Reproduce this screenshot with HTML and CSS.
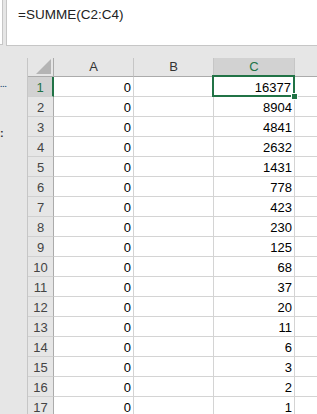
FILE: index.html
```html
<!DOCTYPE html>
<html>
<head>
<meta charset="utf-8">
<link rel="stylesheet" href="styles.css">
</head>
<body>
<div class="app">
  <div class="formula-row">
    <div class="namebox"></div>
    <div class="formula">=SUMME(C2:C4)</div>
  </div>
  <div class="main">
    <div class="side">
      <span class="dots">...</span>
      <span class="colon">:</span>
    </div>
    <div class="sheet">
      <div class="hdr corner"><span class="tri"></span></div>
      <div class="hdr col">A</div>
      <div class="hdr col">B</div>
      <div class="hdr col sel">C</div>
      <div class="hdr col last"></div>

      <div class="rh sel">1</div><div class="c">0</div><div class="c"></div><div class="c active">16377<span class="handle"></span></div><div class="c last"></div>
      <div class="rh">2</div><div class="c">0</div><div class="c"></div><div class="c">8904</div><div class="c last"></div>
      <div class="rh">3</div><div class="c">0</div><div class="c"></div><div class="c">4841</div><div class="c last"></div>
      <div class="rh">4</div><div class="c">0</div><div class="c"></div><div class="c">2632</div><div class="c last"></div>
      <div class="rh">5</div><div class="c">0</div><div class="c"></div><div class="c">1431</div><div class="c last"></div>
      <div class="rh">6</div><div class="c">0</div><div class="c"></div><div class="c">778</div><div class="c last"></div>
      <div class="rh">7</div><div class="c">0</div><div class="c"></div><div class="c">423</div><div class="c last"></div>
      <div class="rh">8</div><div class="c">0</div><div class="c"></div><div class="c">230</div><div class="c last"></div>
      <div class="rh">9</div><div class="c">0</div><div class="c"></div><div class="c">125</div><div class="c last"></div>
      <div class="rh">10</div><div class="c">0</div><div class="c"></div><div class="c">68</div><div class="c last"></div>
      <div class="rh">11</div><div class="c">0</div><div class="c"></div><div class="c">37</div><div class="c last"></div>
      <div class="rh">12</div><div class="c">0</div><div class="c"></div><div class="c">20</div><div class="c last"></div>
      <div class="rh">13</div><div class="c">0</div><div class="c"></div><div class="c">11</div><div class="c last"></div>
      <div class="rh">14</div><div class="c">0</div><div class="c"></div><div class="c">6</div><div class="c last"></div>
      <div class="rh">15</div><div class="c">0</div><div class="c"></div><div class="c">3</div><div class="c last"></div>
      <div class="rh">16</div><div class="c">0</div><div class="c"></div><div class="c">2</div><div class="c last"></div>
      <div class="rh">17</div><div class="c">0</div><div class="c"></div><div class="c">1</div><div class="c last"></div>
    </div>
  </div>
</div>
</body>
</html>
```

FILE: styles.css
```css
* { box-sizing: border-box; }
html, body {
  margin: 0;
  padding: 0;
  width: 317px;
  height: 414px;
  overflow: hidden;
  background: #e6e6e6;
  font-family: "Liberation Sans", Arial, sans-serif;
  font-size: 13px;
  color: #000;
}
.app {
  display: flex;
  flex-direction: column;
  height: 414px;
}
.formula-row {
  display: flex;
  height: 46px;
  gap: 3px;
  flex: none;
}
.namebox {
  width: 3px;
  background: #fff;
  border-right: 1px solid #c6c6c6;
  border-bottom: 1px solid #c6c6c6;
  height: 45px;
}
.formula {
  flex: 1;
  background: #fff;
  border-left: 1px solid #c6c6c6;
  border-bottom: 1px solid #c6c6c6;
  padding: 7px 0 0 11px;
  font-size: 13.5px;
  color: #222;
  line-height: 16px;
}
.main {
  display: flex;
  padding-top: 12px;
  flex: 1;
  min-height: 0;
}
.side {
  width: 28px;
  flex: none;
  border-right: 1px solid #c6c6c6;
  display: flex;
  flex-direction: column;
  align-items: flex-start;
}
.dots {
  margin-top: 22px;
  font-size: 8px;
  line-height: 10px;
  letter-spacing: 0;
  color: #1f4e79;
  font-weight: bold;
}
.colon {
  margin-top: 38px;
  font-size: 11px;
  line-height: 10px;
  color: #333;
  font-weight: bold;
}
.sheet {
  flex: 1;
  display: grid;
  grid-template-columns: 26px 80px 80px 81px 1fr;
  grid-auto-rows: 20px;
  grid-template-rows: 19px;
  align-content: start;
}
.hdr {
  background: #e6e6e6;
  border-right: 1px solid #c6c6c6;
  border-bottom: 1px solid #ababab;
  text-align: center;
  line-height: 18px;
  color: #333;
}
.hdr.last { border-right: none; }
.hdr.sel {
  background: #d2d2d2;
  color: #217346;
  border-bottom: 1px solid #9b9b9b;
}
.corner {
  position: relative;
  border-right: 1px solid #ababab;
}
.tri {
  position: absolute;
  right: 2px;
  bottom: 2px;
  width: 0;
  height: 0;
  border-left: 15px solid transparent;
  border-bottom: 15px solid #b4b4b4;
}
.rh {
  background: #e6e6e6;
  border-right: 1px solid #ababab;
  border-bottom: 1px solid #d0d0d0;
  text-align: center;
  line-height: 20px;
  padding-top: 1px;
  color: #444;
}
.rh.sel {
  background: #d2d2d2;
  color: #217346;
  border-right: 2px solid #217346;
}
.c {
  background: #fff;
  border-right: 1px solid #d4d4d4;
  border-bottom: 1px solid #d4d4d4;
  text-align: right;
  padding-right: 2px;
  line-height: 20px;
  padding-top: 1px;
}
.c.last { border-right: none; }
.active {
  position: relative;
  padding-right: 3px;
}
.active::before {
  content: "";
  position: absolute;
  left: -2px;
  top: -2px;
  right: -1px;
  bottom: -1px;
  border: 2px solid #217346;
}
.handle {
  position: absolute;
  right: -4px;
  bottom: -4px;
  width: 7px;
  height: 7px;
  background: #217346;
  border: 1px solid #fff;
}
```
